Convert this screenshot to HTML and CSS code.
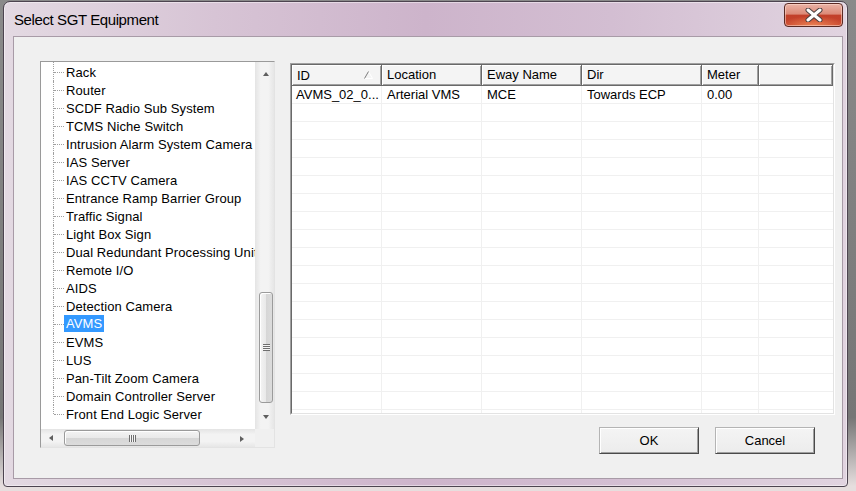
FILE: index.html
```html
<!DOCTYPE html>
<html lang="en">
<head>
<meta charset="utf-8">
<title>Select SGT Equipment</title>
<link rel="stylesheet" href="styles.css">
</head>
<body>
<div class="window">
  <div class="titlebar">
    <span class="title">Select SGT Equipment</span>
    <button class="close" aria-label="Close">
      <svg width="18" height="14" viewBox="0 0 18 14">
        <path d="M3 2 L15 12 M15 2 L3 12" stroke="#4a4040" stroke-width="5" stroke-linecap="round"/>
        <path d="M3 2 L15 12 M15 2 L3 12" stroke="#ffffff" stroke-width="3" stroke-linecap="round"/>
      </svg>
    </button>
  </div>
  <div class="client">
    <div class="tree">
      <ul class="tree-items">
        <li>Rack</li>
        <li>Router</li>
        <li>SCDF Radio Sub System</li>
        <li>TCMS Niche Switch</li>
        <li>Intrusion Alarm System Camera</li>
        <li>IAS Server</li>
        <li>IAS CCTV Camera</li>
        <li>Entrance Ramp Barrier Group</li>
        <li>Traffic Signal</li>
        <li>Light Box Sign</li>
        <li>Dual Redundant Processing Unit</li>
        <li>Remote I/O</li>
        <li>AIDS</li>
        <li>Detection Camera</li>
        <li><span class="selected">AVMS</span></li>
        <li>EVMS</li>
        <li>LUS</li>
        <li>Pan-Tilt Zoom Camera</li>
        <li>Domain Controller Server</li>
        <li>Front End Logic Server</li>
      </ul>
      <div class="vscroll">
        <div class="sb-btn up"><span class="arrow arrow-up"></span></div>
        <div class="vtrack">
          <div class="vthumb"><span class="grip-h"></span></div>
        </div>
        <div class="sb-btn down"><span class="arrow arrow-down"></span></div>
      </div>
      <div class="hscroll">
        <div class="sb-btn left"><span class="arrow arrow-left"></span></div>
        <div class="htrack">
          <div class="hthumb"><span class="grip-v"></span></div>
        </div>
        <div class="sb-btn right"><span class="arrow arrow-right"></span></div>
      </div>
      <div class="corner"></div>
    </div>

    <div class="right">
      <div class="list">
        <div class="list-inner">
          <div class="lv-header">
            <div class="hcell c-id"><span>ID</span>
              <svg class="sort" width="9" height="8" viewBox="0 0 9 8">
                <path d="M4.5 0.5 L8.5 7.5 L0.5 7.5" stroke="#ffffff" stroke-width="1" fill="none"/>
                <path d="M0.5 7.5 L4.5 0.5" stroke="#7c7c7c" stroke-width="1" fill="none"/>
              </svg>
            </div>
            <div class="hcell c-loc">Location</div>
            <div class="hcell c-eway">Eway Name</div>
            <div class="hcell c-dir">Dir</div>
            <div class="hcell c-meter">Meter</div>
            <div class="hcell c-fill"></div>
          </div>
          <div class="lv-body">
            <div class="col c-id"><div class="cell">AVMS_02_0...</div></div>
            <div class="col c-loc"><div class="cell">Arterial VMS</div></div>
            <div class="col c-eway"><div class="cell">MCE</div></div>
            <div class="col c-dir"><div class="cell">Towards ECP</div></div>
            <div class="col c-meter"><div class="cell">0.00</div></div>
            <div class="col c-fill"></div>
          </div>
        </div>
      </div>
      <div class="buttons">
        <button class="btn default">OK</button>
        <button class="btn">Cancel</button>
      </div>
    </div>
  </div>
</div>
</body>
</html>
```

FILE: styles.css
```css
* { box-sizing: border-box; }

html, body { margin: 0; }

body {
  width: 856px;
  height: 491px;
  overflow: hidden;
  padding: 1px 0 0 3px;
  background: linear-gradient(to bottom, #8a8a8a 0, #767676 85%, #e6dede 99%);
  font-family: "Liberation Sans", Arial, sans-serif;
  font-size: 13px;
  color: #000;
}

.window {
  width: 845px;
  height: 486px;
  border: 1px solid #4d4450;
  border-radius: 7px 7px 4px 4px;
  background: linear-gradient(to right, #e3d9e2 0%, #d7c4d5 25%, #cdb4cb 50%, #d3bed2 72%, #e1d4e0 100%);
  box-shadow: inset 0 0 0 1px rgba(255, 255, 255, 0.45);
  display: flex;
  flex-direction: column;
  padding: 0 4px 7px 9px;
}

.titlebar {
  height: 34px;
  display: flex;
  align-items: flex-start;
}

.title {
  font-size: 15px;
  line-height: 17px;
  margin-top: 9px;
  margin-left: 1px;
  letter-spacing: -0.4px;
  color: #000;
}

.close {
  margin-left: auto;
  margin-top: 1px;
  width: 59px;
  height: 24px;
  padding: 0;
  border: 1px solid #5a2a24;
  border-radius: 4px;
  background:
    radial-gradient(ellipse 60% 45% at 50% 100%, rgba(240, 140, 90, 0.9), rgba(240, 140, 90, 0) 100%),
    linear-gradient(to bottom, #eab3a6 0%, #dc8a78 45%, #c2402a 52%, #c7442c 100%);
  box-shadow: inset 0 0 0 1px rgba(255, 220, 210, 0.55);
  display: flex;
  align-items: center;
  justify-content: center;
}

.client {
  flex: 1;
  background: #f0f0f0;
  border: 1px solid #a89ba7;
  display: flex;
  align-items: flex-start;
  gap: 15px;
  padding: 24px 0 0 26px;
}

/* ---------- tree ---------- */
.tree {
  width: 235px;
  height: 387px;
  border: 1px solid;
  border-color: #9a9a9a #e3e3e3 #e3e3e3 #9a9a9a;
  background: #fff;
  display: grid;
  grid-template-columns: 214px 19px;
  grid-template-rows: 367px 18px;
}

.tree-items {
  list-style: none;
  margin: 0;
  padding: 1px 0 0 0;
  overflow: hidden;
  letter-spacing: 0.1px;
}

.tree-items li {
  position: relative;
  height: 18px;
  line-height: 19px;
  padding-left: 25px;
  white-space: nowrap;
}

.tree-items li::before {
  content: "";
  position: absolute;
  left: 12px;
  top: 0;
  bottom: 0;
  border-left: 1px dotted #a0a0a0;
}

.tree-items li:first-child::before { top: -1px; }

.tree-items li:last-child::before { bottom: 9px; }

.tree-items li::after {
  content: "";
  position: absolute;
  left: 13px;
  top: 9px;
  width: 10px;
  border-top: 1px dotted #a0a0a0;
}

.selected {
  display: inline-block;
  height: 17px;
  line-height: 18px;
  padding: 0 2px;
  margin-left: -2px;
  background: #3399ff;
  color: #fff;
  vertical-align: top;
}

/* scrollbars */
.vscroll {
  display: flex;
  flex-direction: column;
  background: linear-gradient(to right, #e4e4e4 0, #f3f3f3 30%, #f3f3f3 70%, #e6e6e6 100%);
}

.hscroll {
  display: flex;
  background: linear-gradient(to bottom, #e4e4e4 0, #f3f3f3 30%, #f3f3f3 70%, #e6e6e6 100%);
}

.corner { background: #f0f0f0; }

.sb-btn {
  display: flex;
  align-items: center;
  justify-content: center;
  flex: none;
}

.sb-btn.up { height: 24px; padding-left: 2px; }
.sb-btn.down { height: 24px; margin-top: auto; padding-left: 2px; }
.sb-btn.left { width: 20px; }
.sb-btn.right { width: 26px; margin-left: auto; }

.arrow {
  width: 0;
  height: 0;
  border-style: solid;
}

.arrow-up { border-width: 0 3.5px 4px 3.5px; border-color: transparent transparent #5f5f5f transparent; }
.arrow-down { border-width: 4px 3.5px 0 3.5px; border-color: #5f5f5f transparent transparent transparent; }
.arrow-left { border-width: 3.5px 4px 3.5px 0; border-color: transparent #5f5f5f transparent transparent; }
.arrow-right { border-width: 3.5px 0 3.5px 4px; border-color: transparent transparent transparent #5f5f5f; }

.vtrack, .htrack { flex: 1; display: flex; }
.vtrack { flex-direction: column; }

.vthumb {
  margin-top: 206px;
  margin-left: 4px;
  width: 14px;
  height: 111px;
  border: 1px solid #9b9b9b;
  border-radius: 3px;
  background: linear-gradient(to right, #f4f4f4 0, #e9e9e9 50%, #d6d6d6 51%, #dcdcdc 100%);
  box-shadow: inset 1px 1px 0 #fff;
  display: flex;
  align-items: center;
  justify-content: center;
}

.hthumb {
  margin-left: 3px;
  margin-top: 1px;
  width: 136px;
  height: 16px;
  border: 1px solid #9b9b9b;
  border-radius: 3px;
  background: linear-gradient(to bottom, #f4f4f4 0, #e9e9e9 50%, #d6d6d6 51%, #dcdcdc 100%);
  box-shadow: inset 1px 1px 0 #fff;
  display: flex;
  align-items: center;
  justify-content: center;
}

.grip-h {
  width: 7px;
  height: 7px;
  background: repeating-linear-gradient(to bottom, #6f6f6f 0 1px, #f6f6f6 1px 2px);
}

.grip-v {
  width: 7px;
  height: 7px;
  background: repeating-linear-gradient(to right, #6f6f6f 0 1px, #f6f6f6 1px 2px);
}

/* ---------- right column ---------- */
.right {
  margin-top: 2px;
  display: flex;
  flex-direction: column;
}

.list {
  width: 545px;
  height: 352px;
  border: 1px solid;
  border-color: #a0a0a0 #ffffff #ffffff #a0a0a0;
}

.list-inner {
  height: 100%;
  border: 1px solid;
  border-color: #696969 #e3e3e3 #e3e3e3 #696969;
  background: #fff;
  display: flex;
  flex-direction: column;
  overflow: hidden;
}

.lv-header {
  display: flex;
  height: 21px;
  flex: none;
}

.hcell {
  height: 21px;
  line-height: 19px;
  padding-left: 5px;
  background: #f4f4f4;
  border-right: 1px solid #696969;
  border-bottom: 1px solid #696969;
  box-shadow: inset 1px 1px 0 #ffffff, inset -1px -1px 0 #a0a0a0;
  white-space: nowrap;
  flex: none;
}

.hcell.c-id {
  display: flex;
  align-items: center;
  justify-content: space-between;
  padding-right: 8px;
}

.hcell.c-id span { line-height: 19px; }

.sort { display: block; margin-top: -1px; }

.c-id { width: 90px; }
.c-loc { width: 100px; }
.c-eway { width: 100px; }
.c-dir { width: 120px; }
.c-meter { width: 57px; }
.c-fill { flex: 1; }

.hcell.c-fill { flex: 1; }

.lv-body {
  flex: 1;
  display: flex;
  background: repeating-linear-gradient(to bottom, #ffffff 0 17px, #f0f0f0 17px 18px);
}

.col {
  border-right: 1px solid #f0f0f0;
  flex: none;
}

.col.c-fill { border-right: 0; flex: 1; }

.cell {
  height: 18px;
  line-height: 18px;
  padding-left: 4px;
  white-space: nowrap;
  overflow: hidden;
}

.c-loc .cell, .c-eway .cell, .c-dir .cell, .c-meter .cell { padding-left: 5px; }

.buttons {
  display: flex;
  justify-content: flex-end;
  gap: 16px;
  margin-top: 12px;
  padding-right: 20px;
}

.btn {
  width: 100px;
  height: 27px;
  padding: 0;
  font-family: "Liberation Sans", Arial, sans-serif;
  font-size: 13px;
  color: #000;
  background: linear-gradient(to bottom, #f4f4f4, #ececec);
  border: 1px solid;
  border-color: #b4b4b4 #4a4a4a #4a4a4a #b4b4b4;
  box-shadow: inset 1px 1px 0 #ffffff, inset -1px -1px 0 #a0a0a0;
}
```
